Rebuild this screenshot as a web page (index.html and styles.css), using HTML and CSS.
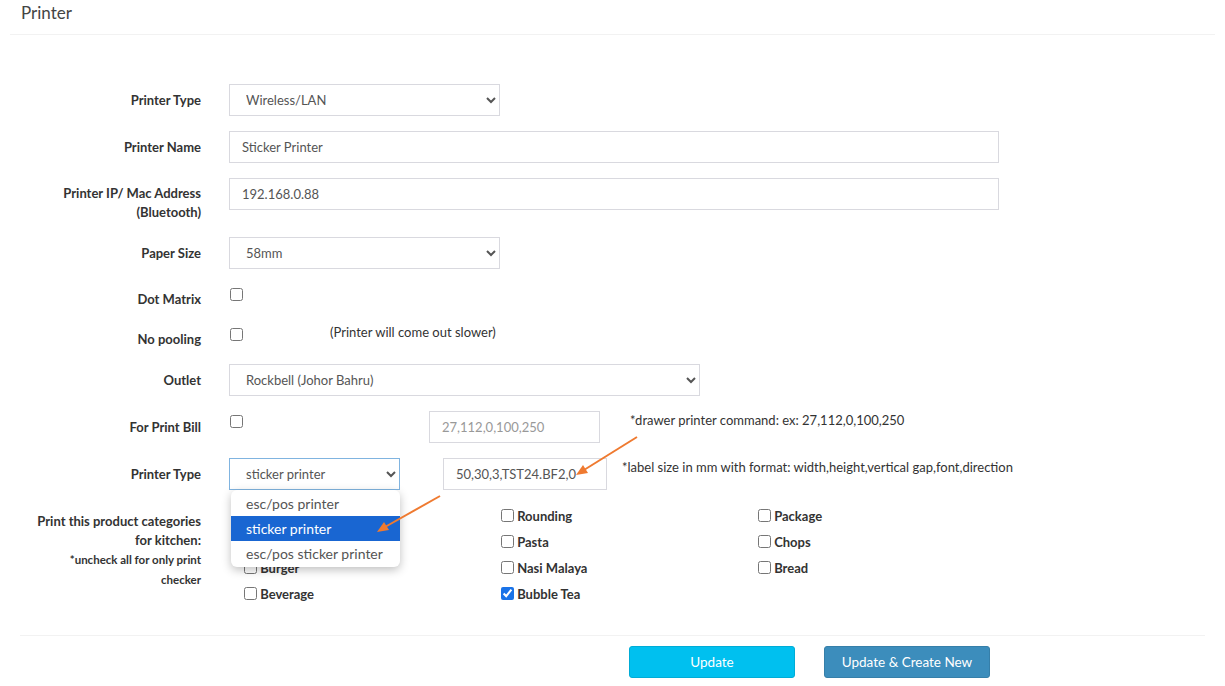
FILE: index.html
```html
<!DOCTYPE html>
<html lang="en">
  <head>
    <meta charset="UTF-8" />
    <meta name="viewport" content="width=device-width, initial-scale=1.0" />
    <title>Printer</title>
    <link rel="stylesheet" href="styles.css">
  </head>
  <body>
    <div class="page">
      <div class="box-header">
        <h3>Printer</h3>
      </div>
      <form class="form">
        <div class="row">
          <label>Printer Type</label>
          <div class="field">
            <select class="w-271">
              <option>Wireless/LAN</option>
            </select>
          </div>
        </div>
        <div class="row">
          <label>Printer Name</label>
          <div class="field">
            <input class="w-770" type="text" value="Sticker Printer">
          </div>
        </div>
        <div class="row">
          <label class="two">Printer IP/ Mac Address (Bluetooth)</label>
          <div class="field">
            <input class="w-770" type="text" value="192.168.0.88">
          </div>
        </div>
        <div class="row">
          <label>Paper Size</label>
          <div class="field">
            <select class="w-271">
              <option>58mm</option>
            </select>
          </div>
        </div>
        <div class="row short">
          <label>Dot Matrix</label>
          <div class="field">
            <input class="check" type="checkbox">
          </div>
        </div>
        <div class="row short">
          <label>No pooling</label>
          <div class="field inline">
            <input class="check" type="checkbox">
            <span class="hint slow">(Printer will come out slower)</span>
          </div>
        </div>
        <div class="row">
          <label>Outlet</label>
          <div class="field">
            <select class="w-471">
              <option>Rockbell (Johor Bahru)</option>
            </select>
          </div>
        </div>
        <div class="row">
          <label>For Print Bill</label>
          <div class="field inline">
            <input class="check" type="checkbox">
            <input class="w-171 drawer" type="text" placeholder="27,112,0,100,250">
            <span class="hint note">*drawer printer command: ex: 27,112,0,100,250</span>
          </div>
        </div>
        <div class="row">
          <label>Printer Type</label>
          <div class="field inline">
            <div class="select-wrap">
              <select class="w-171 focus">
                <option>sticker printer</option>
              </select>
              <ul class="menu">
                <li>esc/pos printer</li>
                <li class="active">sticker printer</li>
                <li>esc/pos sticker printer</li>
              </ul>
            </div>
            <input class="w-164 label-size" type="text" value="50,30,3,TST24.BF2,0">
            <span class="hint note2">*label size in mm with format: width,height,vertical gap,font,direction</span>
          </div>
        </div>
        <div class="row">
          <label>Print this product categories<br>for kitchen:<small>*uncheck all for only print checker</small></label>
          <div class="field">
            <div class="cats">
              <div class="cat"><input type="checkbox"></div>
              <div class="cat"><input type="checkbox"> Rounding</div>
              <div class="cat"><input type="checkbox"> Package</div>
              <div class="cat"><input type="checkbox"></div>
              <div class="cat"><input type="checkbox"> Pasta</div>
              <div class="cat"><input type="checkbox"> Chops</div>
              <div class="cat"><input type="checkbox"> Burger</div>
              <div class="cat"><input type="checkbox"> Nasi Malaya</div>
              <div class="cat"><input type="checkbox"> Bread</div>
              <div class="cat"><input type="checkbox"> Beverage</div>
              <div class="cat"><input type="checkbox" checked> Bubble Tea</div>
            </div>
          </div>
        </div>
      </form>
      <div class="box-footer">
        <button class="btn btn-info">Update</button>
        <button class="btn btn-primary">Update &amp; Create New</button>
      </div>
      <svg class="arrows" width="1225" height="686" viewBox="0 0 1225 686">
        <g stroke="#ef7a30" stroke-width="2" fill="#ef7a30">
          <line x1="637" y1="437" x2="584" y2="470" />
          <polygon points="576,475 583,465 588,473" stroke="none" />
          <line x1="440" y1="496" x2="385" y2="527" />
          <polygon points="377,532 384,522 389,530" stroke="none" />
        </g>
      </svg>
    </div>
  </body>
</html>
```

FILE: styles.css
```css
* {
  margin: 0;
  padding: 0;
  box-sizing: border-box;
}
body {
  background-color: #fff;
  font-family: Lato, "Liberation Sans", sans-serif;
  font-size: 13px;
  color: #333;
}
.page {
  position: relative;
  width: 1225px;
  height: 686px;
  overflow: hidden;
}
.box-header {
  margin: 0 10px;
  height: 35px;
  border-bottom: 1px solid #f2f2f2;
  padding: 2px 11px 0;
}
.box-header h3 {
  font-size: 17px;
  font-weight: normal;
  color: #444;
  line-height: 22px;
}
.form {
  padding-top: 49px;
}
.row {
  display: grid;
  grid-template-columns: 201px 1fr;
  column-gap: 28px;
  margin-bottom: 15px;
}
.row label {
  text-align: right;
  font-weight: bold;
  padding-top: 7px;
  line-height: 19px;
}
.row label.two {
  padding-top: 6px;
}
.row.short label {
  padding-top: 6px;
  line-height: 19px;
}
.row label small {
  display: block;
  font-size: 11.5px;
  line-height: 19.5px;
  padding-left: 30px;
}
.field.inline {
  display: flex;
  align-items: flex-start;
}
input[type="text"],
select {
  height: 32px;
  border: 1px solid #d9d9df;
  border-radius: 0;
  background-color: #fff;
  font-family: inherit;
  font-size: 13px;
  color: #555;
  padding: 0 12px;
  outline: none;
}
input::placeholder {
  color: #999;
}
.w-271 { width: 271px; }
.w-770 { width: 770px; }
.w-471 { width: 471px; }
.w-171 { width: 171px; }
.w-164 { width: 164px; }
.check {
  width: 13px;
  height: 13px;
  margin: 4px 0 0 1px;
}
input[type="checkbox"] {
  accent-color: #1a73e8;
}
.hint {
  color: #333;
  line-height: 19px;
}
.slow {
  margin-left: 87px;
  margin-top: -1px;
}
.drawer {
  margin-left: 186px;
}
.note {
  margin-left: 30px;
  margin-top: 0;
}
.select-wrap {
  position: relative;
}
.focus {
  border-color: #80b4e0;
}
.menu {
  position: absolute;
  left: 2px;
  top: 32px;
  width: 169px;
  list-style: none;
  background: #fff;
  border-radius: 6px;
  box-shadow: 0 3px 10px rgba(0, 0, 0, 0.25);
  padding: 1px 0 1px;
  z-index: 5;
  overflow: hidden;
}
.menu li {
  height: 25px;
  line-height: 25px;
  padding-left: 15px;
  font-size: 14px;
  color: #555;
}
.menu li.active {
  background-color: #1966d2;
  color: #fff;
}
.label-size {
  margin-left: 43px;
  color: #333;
}
.note2 {
  margin-left: 15px;
  margin-top: 0;
}
.cats {
  display: grid;
  grid-template-columns: 257px 257px 257px;
  row-gap: 2px;
  padding-left: 15px;
  margin-top: -1px;
}
.cat {
  font-weight: bold;
  line-height: 24px;
  height: 24px;
}
.cat input {
  width: 13px;
  height: 13px;
  vertical-align: -1px;
}
.box-footer {
  margin: 29px 20px 0;
  border-top: 1px solid #f2f2f2;
  padding: 10px 0 0 609px;
  display: flex;
  gap: 29px;
}
.btn {
  width: 166px;
  height: 32px;
  border: 1px solid transparent;
  border-radius: 3px;
  font-family: inherit;
  font-size: 13.5px;
  color: #fff;
}
.btn-info {
  background-color: #00c0ef;
  border-color: #00acd6;
}
.btn-primary {
  background-color: #3c8dbc;
  border-color: #367fa9;
}
.arrows {
  position: absolute;
  left: 0;
  top: 0;
  pointer-events: none;
  z-index: 10;
}
```
